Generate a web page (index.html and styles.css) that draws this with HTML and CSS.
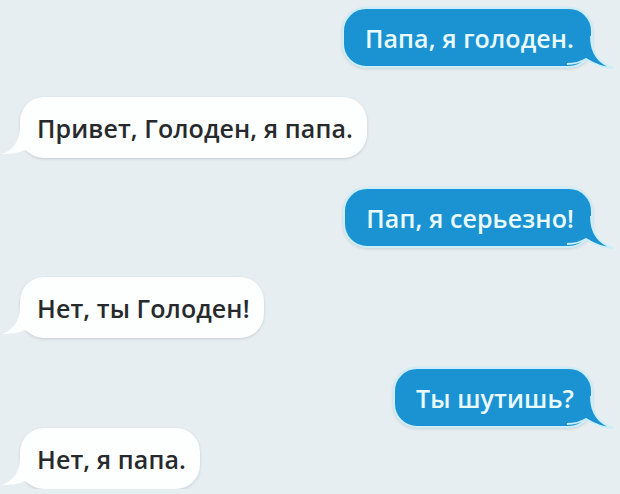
FILE: index.html
```html
<!DOCTYPE html>
<html lang="ru">
  <head>
    <meta charset="UTF-8" />
    <meta name="viewport" content="width=device-width, initial-scale=1.0" />
    <title>Чат</title>
    <link rel="stylesheet" href="styles.css">
  </head>
  <body>
    <main class="chat">
      <div class="row row-out">
        <p class="bubble bubble-out">
          <svg class="tail tail-out" width="48" height="40" viewBox="0 0 48 40"><path class="tail-fill" d="M24 3C24 20 31 30 46 35C36 35 27 31 19 26C14 29 8 31 0 31L0 3Z"/><path class="tail-line" d="M24 3C24 20 31 30 46 35C36 35 27 31 19 26C14 29 8 31 0 31"/></svg>
          <span class="text">Папа, я голоден.</span>
        </p>
      </div>
      <div class="row row-in">
        <p class="bubble bubble-in">
          <svg class="tail tail-in" width="48" height="40" viewBox="0 0 48 40"><path class="tail-fill" d="M20 3C20 18 13 27 2 31C11 31 19 30 25 27C31 31 38 34 48 35L48 3Z"/></svg>
          <span class="text">Привет, Голоден, я папа.</span>
        </p>
      </div>
      <div class="row row-out">
        <p class="bubble bubble-out">
          <svg class="tail tail-out" width="48" height="40" viewBox="0 0 48 40"><path class="tail-fill" d="M24 3C24 20 31 30 46 35C36 35 27 31 19 26C14 29 8 31 0 31L0 3Z"/><path class="tail-line" d="M24 3C24 20 31 30 46 35C36 35 27 31 19 26C14 29 8 31 0 31"/></svg>
          <span class="text">Пап, я серьезно!</span>
        </p>
      </div>
      <div class="row row-in">
        <p class="bubble bubble-in">
          <svg class="tail tail-in" width="48" height="40" viewBox="0 0 48 40"><path class="tail-fill" d="M20 3C20 18 13 27 2 31C11 31 19 30 25 27C31 31 38 34 48 35L48 3Z"/></svg>
          <span class="text">Нет, ты Голоден!</span>
        </p>
      </div>
      <div class="row row-out">
        <p class="bubble bubble-out">
          <svg class="tail tail-out" width="48" height="40" viewBox="0 0 48 40"><path class="tail-fill" d="M24 3C24 20 31 30 46 35C36 35 27 31 19 26C14 29 8 31 0 31L0 3Z"/><path class="tail-line" d="M24 3C24 20 31 30 46 35C36 35 27 31 19 26C14 29 8 31 0 31"/></svg>
          <span class="text">Ты шутишь?</span>
        </p>
      </div>
      <div class="row row-in row-last">
        <p class="bubble bubble-in">
          <svg class="tail tail-in" width="48" height="40" viewBox="0 0 48 40"><path class="tail-fill" d="M20 3C20 18 13 27 2 31C11 31 19 30 25 27C31 31 38 34 48 35L48 3Z"/></svg>
          <span class="text">Нет, я папа.</span>
        </p>
      </div>
    </main>
  </body>
</html>
```

FILE: styles.css
```css
* {
  box-sizing: border-box;
}

body {
  margin: 0;
  background-color: #e6eef2;
  font-family: "Open Sans", "Noto Sans", sans-serif;
}

.chat {
  display: flex;
  flex-direction: column;
  gap: 29px;
  padding: 7px 27px 0 20px;
}

.row {
  display: flex;
}

.row-out {
  justify-content: flex-end;
}

.row-in {
  justify-content: flex-start;
}

/* последнее сообщение стоит вплотную к предыдущему */
.row-last {
  margin-top: -29px;
}

.bubble {
  position: relative;
  display: flex;
  align-items: center;
  height: 61px;
  margin: 0;
  border-radius: 24px;
  font-size: 25px;
  font-weight: 600;
  letter-spacing: 0.1px;
  white-space: nowrap;
}

/* текст поверх хвостика */
.text {
  position: relative;
}

.bubble-out {
  padding: 0 17px 0 21px;
  color: #eafbff;
  background-color: #1b93d3;
  border: 2px solid #cbeefa;
  box-shadow: 0 1px 3px rgba(0, 0, 0, 0.12);
}

.bubble-in {
  padding: 0 14px 0 17px;
  color: #272a2c;
  background-color: #fdfefe;
  box-shadow: 0 1px 3px rgba(0, 0, 0, 0.14);
}

.tail {
  position: absolute;
}

.tail-out {
  right: -24px;
  bottom: -7px;
}

.tail-out .tail-fill {
  fill: #1b93d3;
}

.tail-out .tail-line {
  fill: none;
  stroke: #cbeefa;
  stroke-width: 2;
}

.tail-in {
  left: -20px;
  bottom: -5px;
}

.tail-in .tail-fill {
  fill: #fdfefe;
}
```
